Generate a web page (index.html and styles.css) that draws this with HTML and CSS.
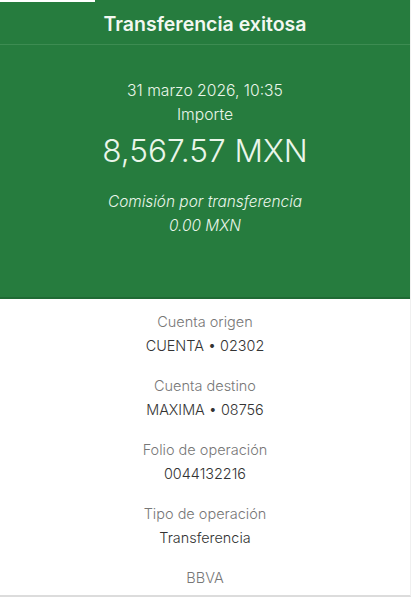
FILE: index.html
```html
<!DOCTYPE html>
<html lang="es">
<head>
  <meta charset="UTF-8">
  <meta name="viewport" content="width=device-width, initial-scale=1.0">
  <title>Transferencia exitosa</title>
  <link rel="stylesheet" href="styles.css">
</head>
<body>
  <div class="topbar"></div>

  <div class="hero">
    <h1 class="hero-title">Transferencia exitosa</h1>
    <div class="hero-body">
      <p class="date">31 marzo 2026, 10:35</p>
      <p class="label">Importe</p>
      <p class="amount">8,567.57 MXN</p>
      <p class="fee">Comisión por transferencia</p>
      <p class="fee">0.00 MXN</p>
    </div>
  </div>

  <div class="details">
    <div class="row">
      <p class="row-label">Cuenta origen</p>
      <p class="row-value">CUENTA • 02302</p>
    </div>
    <div class="row">
      <p class="row-label">Cuenta destino</p>
      <p class="row-value">MAXIMA • 08756</p>
    </div>
    <div class="row">
      <p class="row-label">Folio de operación</p>
      <p class="row-value">0044132216</p>
    </div>
    <div class="row">
      <p class="row-label">Tipo de operación</p>
      <p class="row-value">Transferencia</p>
    </div>
    <div class="row">
      <p class="row-label">BBVA</p>
    </div>
  </div>
</body>
</html>
```

FILE: styles.css
```css
body {
  font-family: Inter, Roboto, Arial, sans-serif;
  margin: 0;
  padding: 0;
  background-color: #fff;
  text-align: center;
  height: 597px;
  overflow: hidden;
  border-right: 1px solid #f0f0f0;
  border-bottom: 2px solid #dcdcdc;
  box-sizing: border-box;
}

p {
  margin: 0;
}

.topbar {
  position: absolute;
  top: 0;
  left: 0;
  width: 95px;
  height: 2px;
  background-color: #fff;
}

.hero {
  background-color: #267c3e;
  color: #eaf6ea;
  height: 297px;
  border-bottom: 2px solid #1f6a34;
}

.hero-title {
  margin: 0;
  padding-top: 4px;
  font-size: 19.5px;
  font-weight: 600;
  line-height: 40px;
  height: 40px;
  border-bottom: 1px solid #3d8c52;
  color: #f2f8f1;
}

.hero-body {
  padding-top: 34px;
}

.date,
.label {
  font-size: 15.7px;
  font-weight: 300;
  line-height: 24px;
}

.amount {
  font-size: 31.6px;
  font-weight: 300;
  line-height: 48px;
  margin-bottom: 15px;
}

.fee {
  font-size: 15.4px;
  font-style: italic;
  font-weight: 300;
  line-height: 24px;
}

.details {
  padding-top: 11px;
  display: flex;
  flex-direction: column;
  gap: 16px;
}

.row {
  line-height: 24px;
}

.row-label {
  font-size: 14.5px;
  color: #777;
  font-weight: 300;
}

.row-value {
  font-size: 14.4px;
  color: #333;
  font-weight: 300;
}
```
